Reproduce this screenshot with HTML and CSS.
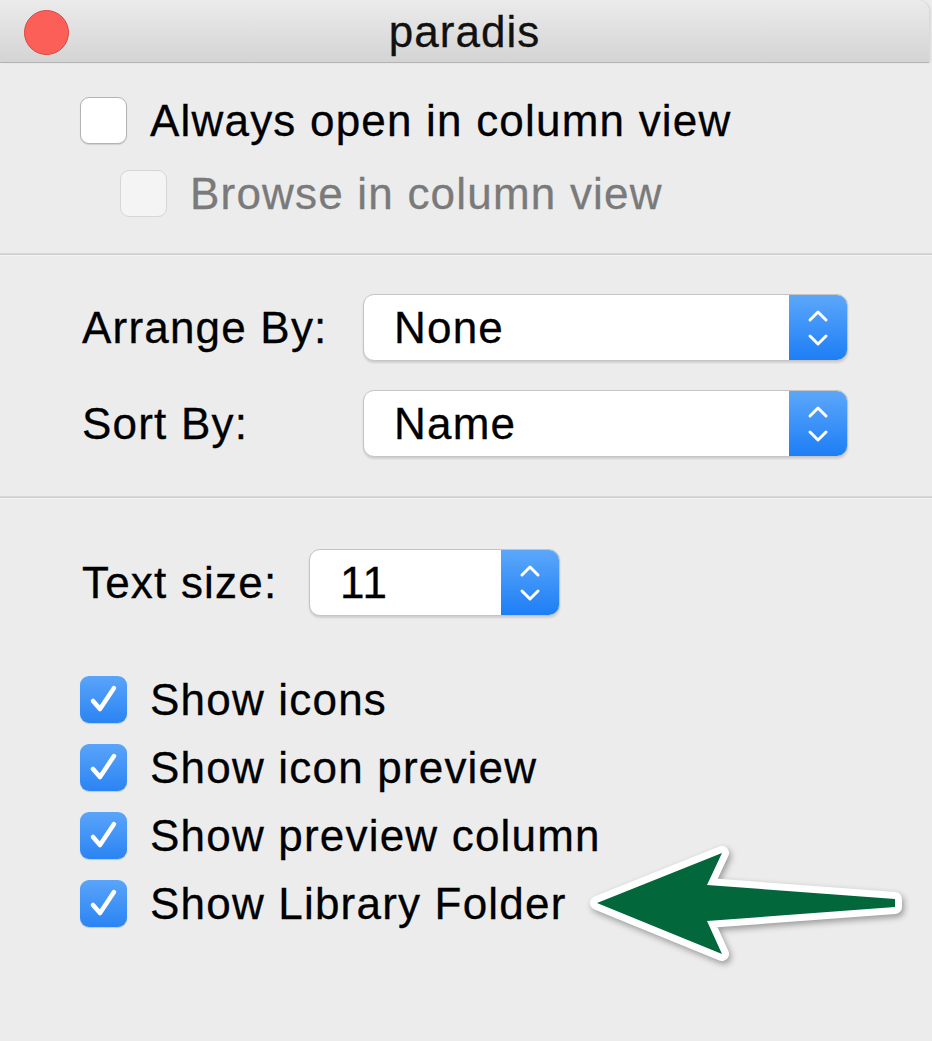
FILE: index.html
```html
<!DOCTYPE html>
<html lang="en">
<head>
    <meta charset="UTF-8">
    <meta name="viewport" content="width=device-width, initial-scale=1.0">
    <title>paradis</title>
    <link rel="stylesheet" href="styles.css">
</head>
<body>

    <div class="window">
        <div class="titlebar">
            <span class="close"></span>
            <span class="title">paradis</span>
            <span></span>
        </div>

        <div class="pane pane-top">
            <label class="check-row">
                <span class="box"></span>
                <span>Always open in column view</span>
            </label>
            <label class="check-row sub disabled">
                <span class="box"></span>
                <span>Browse in column view</span>
            </label>
        </div>

        <div class="divider"></div>

        <div class="pane pane-arrange">
            <span class="label">Arrange By:</span>
            <div class="popup wide">
                <span class="value">None</span>
                <span class="stepper">
                    <svg width="24" height="46" viewBox="0 0 24 46"><path d="M4 15 L12 7 L20 15 M4 31 L12 39 L20 31" fill="none" stroke="#fff" stroke-width="3" stroke-linecap="round" stroke-linejoin="round"/></svg>
                </span>
            </div>
            <span class="label">Sort By:</span>
            <div class="popup wide">
                <span class="value">Name</span>
                <span class="stepper">
                    <svg width="24" height="46" viewBox="0 0 24 46"><path d="M4 15 L12 7 L20 15 M4 31 L12 39 L20 31" fill="none" stroke="#fff" stroke-width="3" stroke-linecap="round" stroke-linejoin="round"/></svg>
                </span>
            </div>
        </div>

        <div class="divider"></div>

        <div class="pane pane-view">
            <div class="size-row">
                <span class="label size-label">Text size:</span>
                <div class="popup small">
                    <span class="value">11</span>
                    <span class="stepper">
                        <svg width="24" height="46" viewBox="0 0 24 46"><path d="M4 15 L12 7 L20 15 M4 31 L12 39 L20 31" fill="none" stroke="#fff" stroke-width="3" stroke-linecap="round" stroke-linejoin="round"/></svg>
                    </span>
                </div>
            </div>

            <div class="checks">
                <label class="check-row">
                    <span class="box on"><svg width="47" height="47" viewBox="0 0 47 47"><path d="M13 25 L20 33 L34 12" fill="none" stroke="#fff" stroke-width="4.5" stroke-linecap="round" stroke-linejoin="round"/></svg></span>
                    <span>Show icons</span>
                </label>
                <label class="check-row">
                    <span class="box on"><svg width="47" height="47" viewBox="0 0 47 47"><path d="M13 25 L20 33 L34 12" fill="none" stroke="#fff" stroke-width="4.5" stroke-linecap="round" stroke-linejoin="round"/></svg></span>
                    <span>Show icon preview</span>
                </label>
                <label class="check-row">
                    <span class="box on"><svg width="47" height="47" viewBox="0 0 47 47"><path d="M13 25 L20 33 L34 12" fill="none" stroke="#fff" stroke-width="4.5" stroke-linecap="round" stroke-linejoin="round"/></svg></span>
                    <span>Show preview column</span>
                </label>
                <label class="check-row">
                    <span class="box on"><svg width="47" height="47" viewBox="0 0 47 47"><path d="M13 25 L20 33 L34 12" fill="none" stroke="#fff" stroke-width="4.5" stroke-linecap="round" stroke-linejoin="round"/></svg></span>
                    <span>Show Library Folder</span>
                </label>
            </div>
        </div>
    </div>

    <!-- annotation arrow over the window -->
    <svg class="arrow" width="932" height="1041" viewBox="0 0 932 1041">
        <polygon points="597,903 722,853 707,885 895,899 895,907 707,921 722,954" fill="#02673a" stroke="#fff" stroke-width="14" stroke-linejoin="round" paint-order="stroke"/>
    </svg>

</body>
</html>
```

FILE: styles.css
```css
body {
    margin: 0;
    background-color: #ececec;
    font-family: "Liberation Sans", Arial, sans-serif;
    color: #000;
    width: 932px;
    height: 1041px;
    overflow: hidden;
    position: relative;
}
.window {
    width: 932px;
}
.titlebar {
    width: 929px;
    height: 62px;
    display: grid;
    grid-template-columns: 1fr auto 1fr;
    align-items: center;
    background: linear-gradient(#ebebeb, #d4d4d4);
    border-bottom: 1px solid #b4b4b4;
    border-top-right-radius: 12px;
    box-shadow: 2px 0 2px rgba(0, 0, 0, 0.08);
}
.close {
    width: 43px;
    height: 43px;
    margin-left: 24px;
    margin-top: 2px;
    border-radius: 50%;
    background-color: #fc5f57;
    border: 1px solid #e0443e;
}
.title {
    font-size: 44px;
    letter-spacing: 1px;
    color: #111;
    margin-top: 2px;
    -webkit-text-stroke: 0.3px #111;
}
.pane {
    padding-left: 80px;
}
.pane-top {
    padding-top: 34px;
    padding-bottom: 36px;
    display: flex;
    flex-direction: column;
    gap: 26px;
}
.check-row,
.label,
.value {
    font-size: 44px;
    letter-spacing: 1.2px;
    -webkit-text-stroke: 0.3px currentColor;
}
.check-row {
    display: flex;
    align-items: center;
    gap: 23px;
    height: 47px;
}
.check-row.sub {
    margin-left: 40px;
}
.check-row.disabled {
    color: #7a7a7a;
}
.box {
    width: 45px;
    height: 45px;
    flex: none;
    border: 1px solid #b3b3b3;
    border-radius: 9px;
    background-color: #fff;
    box-shadow: 0 1px 1px rgba(0, 0, 0, 0.12);
}
.disabled .box {
    background-color: #f4f4f4;
    border-color: #d6d6d6;
    box-shadow: none;
}
.box.on {
    width: 47px;
    height: 47px;
    border: none;
    background: linear-gradient(#5aa4fa, #2b84f3);
    box-shadow: 0 1px 1px rgba(0, 0, 0, 0.15);
}
.box.on svg {
    display: block;
}
.divider {
    height: 1px;
    background-color: #cfcfcf;
    border-top: 1px solid #d9d9d9;
    border-bottom: 1px solid #f4f4f4;
}
.pane-arrange {
    padding-top: 38px;
    padding-bottom: 39px;
    padding-left: 82px;
    display: grid;
    grid-template-columns: 281px 485px;
    row-gap: 29px;
    align-items: center;
}
.popup {
    height: 67px;
    box-sizing: border-box;
    display: flex;
    align-items: stretch;
    background-color: #fff;
    border: 1px solid #c4c4c4;
    border-radius: 11px;
    box-shadow: 0 2px 2px rgba(0, 0, 0, 0.12);
    overflow: hidden;
}
.popup.wide {
    width: 485px;
}
.popup.small {
    width: 251px;
}
.value {
    flex: 1;
    display: flex;
    align-items: center;
    padding-left: 30px;
}
.stepper {
    width: 58px;
    display: flex;
    align-items: center;
    justify-content: center;
    background: linear-gradient(#5ca7fb, #1d7ef5);
}
.pane-view {
    padding-top: 50px;
    padding-left: 82px;
}
.size-row {
    display: flex;
    align-items: center;
}
.size-label {
    width: 227px;
}
.checks {
    margin-top: 60px;
    margin-left: -2px;
    display: flex;
    flex-direction: column;
    gap: 21px;
}
.arrow {
    position: absolute;
    top: 0;
    left: 0;
    pointer-events: none;
    filter: drop-shadow(2px 3px 3px rgba(0, 0, 0, 0.35));
}
```
